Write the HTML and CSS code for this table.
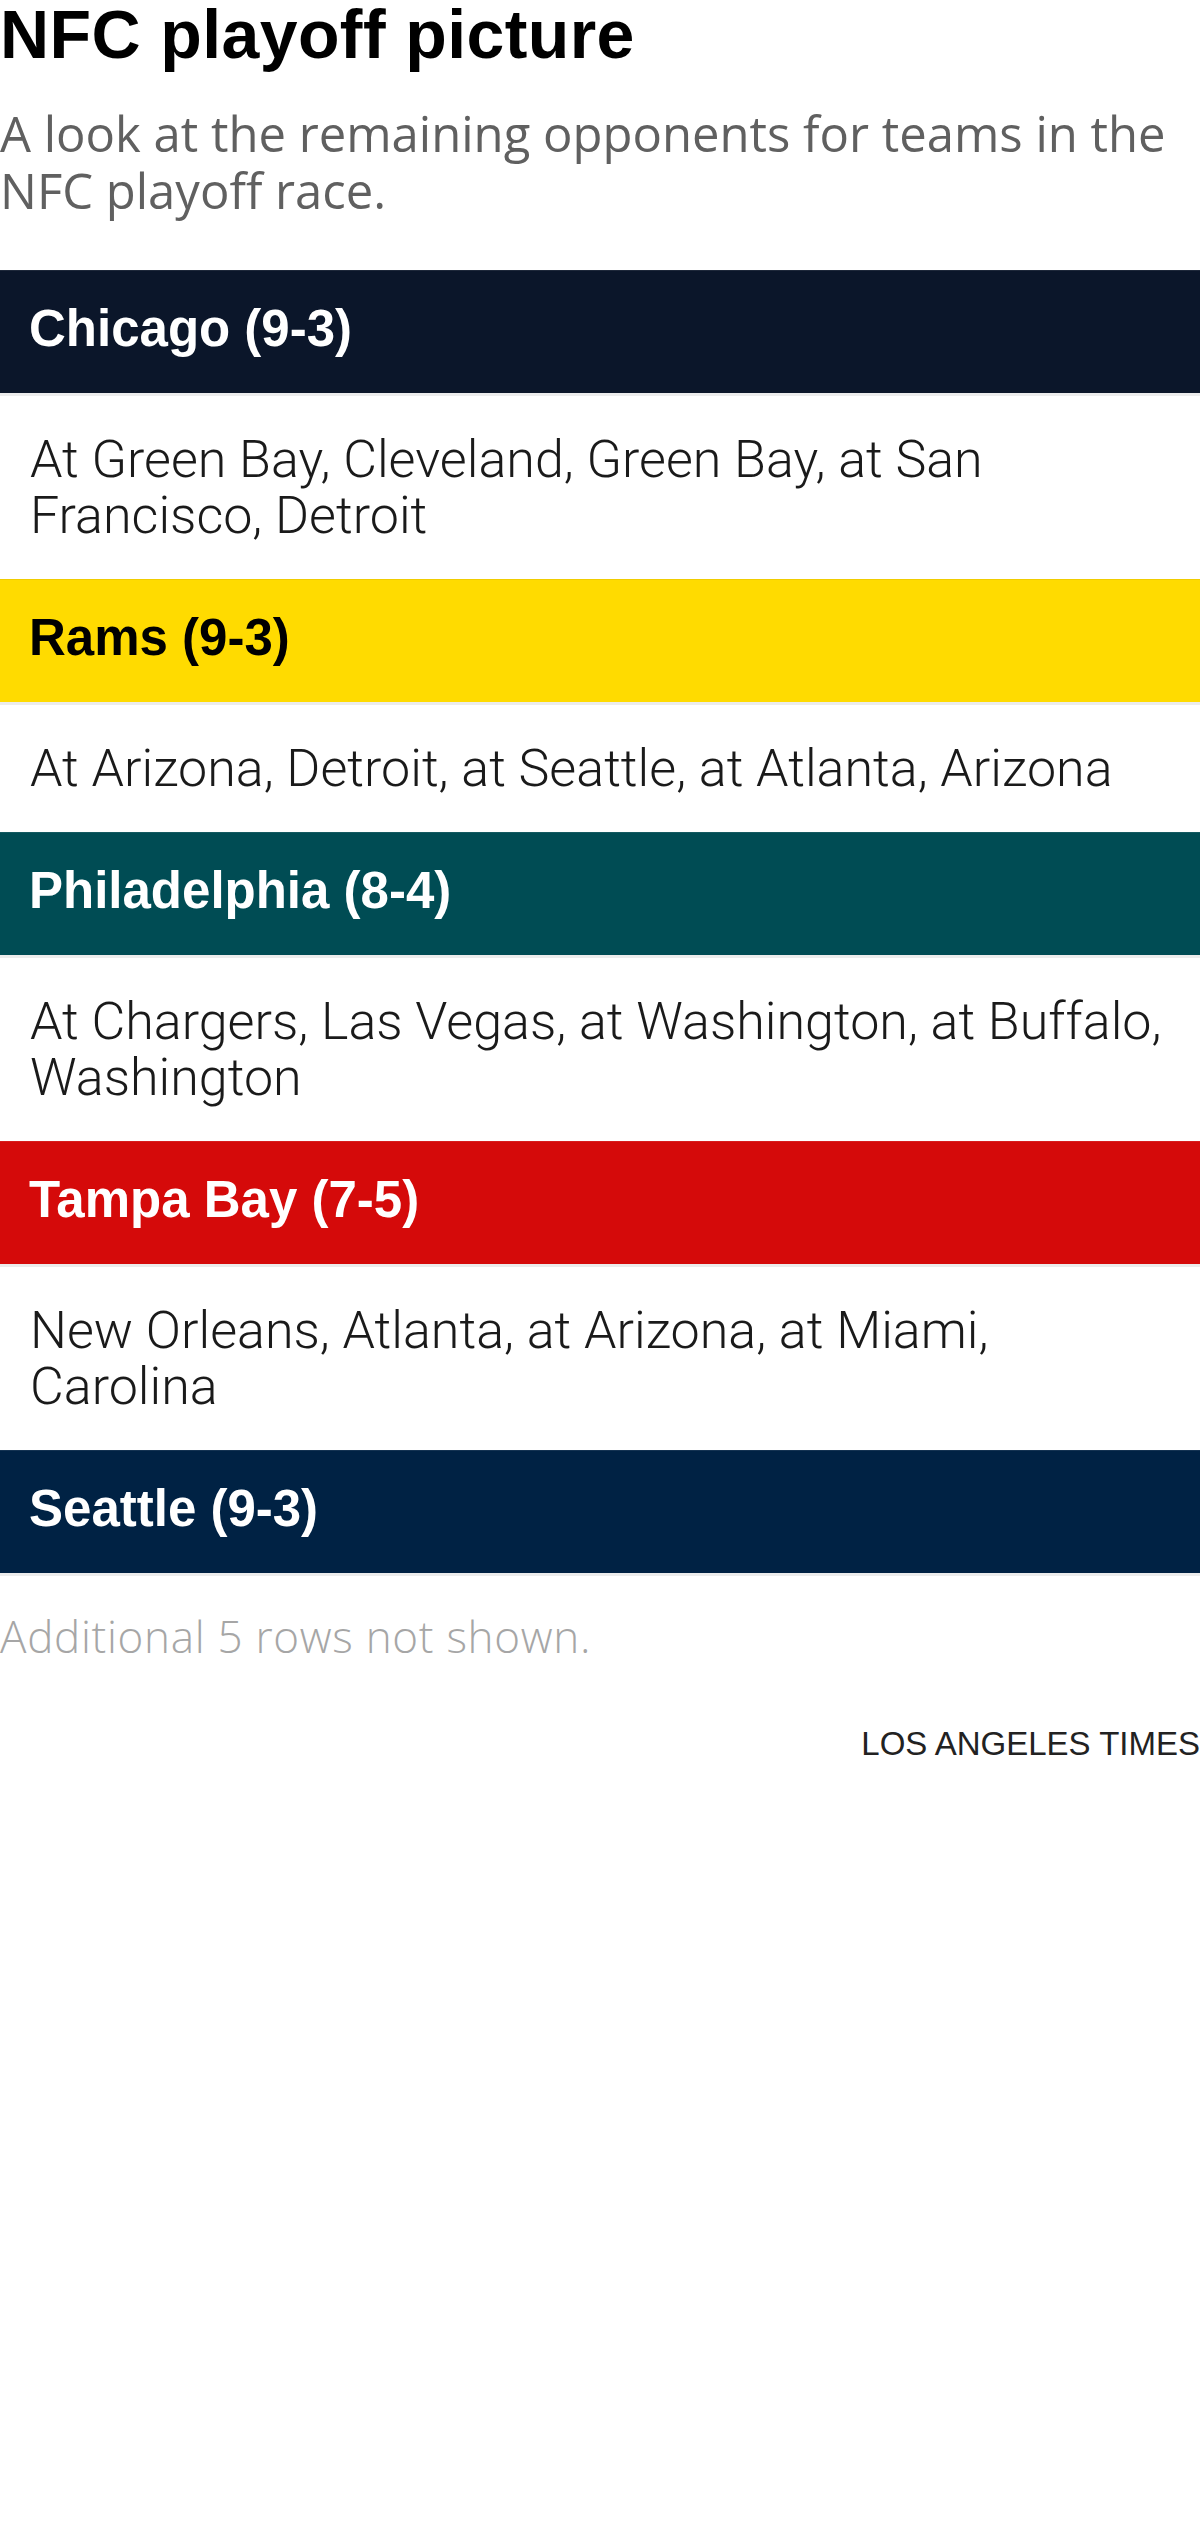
FILE: index.html
```html
<!DOCTYPE html>
<html lang="en">
<head>
<meta charset="utf-8">
<title>NFC playoff picture</title>
<link rel="stylesheet" href="styles.css">
</head>
<body>
<main class="graphic">
  <h1 class="title">NFC playoff picture</h1>
  <p class="dek">A look at the remaining opponents for teams in the NFC playoff race.</p>
  <div class="table">
    <div class="team team-chi">Chicago (9-3)</div>
    <div class="games">At Green Bay, Cleveland, Green Bay, at San Francisco, Detroit</div>
    <div class="team team-lar">Rams (9-3)</div>
    <div class="games">At Arizona, Detroit, at Seattle, at Atlanta, Arizona</div>
    <div class="team team-phi">Philadelphia (8-4)</div>
    <div class="games">At Chargers, Las Vegas, at Washington, at Buffalo, Washington</div>
    <div class="team team-tb">Tampa Bay (7-5)</div>
    <div class="games">New Orleans, Atlanta, at Arizona, at Miami, Carolina</div>
    <div class="team team-sea">Seattle (9-3)</div>
  </div>
  <p class="note">Additional 5 rows not shown.</p>
  <p class="credit">LOS ANGELES TIMES</p>
</main>
</body>
</html>
```
FILE: styles.css
```css
html, body {
  margin: 0;
  padding: 0;
  background: #fff;
}

.graphic {
  width: 1200px;
  font-family: "Liberation Sans", Arial, sans-serif;
  color: #000;
}

.title {
  margin: 0;
  font-family: "Liberation Sans", Arial, sans-serif;
  font-weight: 700;
  font-size: 68px;
  line-height: 68px;
  letter-spacing: 0.4px;
  color: #000;
}

.dek {
  margin: 37px 0 52px;
  font-family: "Open Sans", "Liberation Sans", sans-serif;
  font-weight: 400;
  font-size: 49px;
  line-height: 57px;
  color: #606060;
}

.table {
  display: flex;
  flex-direction: column;
}

.team {
  padding: 28px 29px 34px;
  font-family: "Liberation Sans", Arial, sans-serif;
  font-weight: 700;
  font-size: 51px;
  line-height: 60px;
  color: #fff;
  border-top: 1px solid rgba(255, 255, 255, 0.08);
  border-bottom: 3px solid #ececec;
  margin-top: -1px;
}

.team-chi { background: #0b162a; }
.team-lar { background: #ffdb00; color: #000; border-top-color: #f0cc00; }
.team-phi { background: #004c54; }
.team-tb  { background: #d50a0a; }
.team-sea { background: #002244; }

.games {
  padding: 36px 15px 36px 30px;
  font-family: Roboto, "Liberation Sans", sans-serif;
  font-weight: 300;
  font-size: 52px;
  line-height: 56px;
  color: #1a1a1a;
}

.note {
  margin: 35px 0 0;
  font-family: "Open Sans", "Liberation Sans", sans-serif;
  font-weight: 300;
  font-size: 44px;
  line-height: 50px;
  letter-spacing: 0.7px;
  color: #a6a6a6;
}

.credit {
  margin: 63px 0 0;
  text-align: right;
  font-family: "Liberation Sans", Arial, sans-serif;
  font-weight: 400;
  font-size: 33px;
  line-height: 40px;
  color: #222;
}
```
